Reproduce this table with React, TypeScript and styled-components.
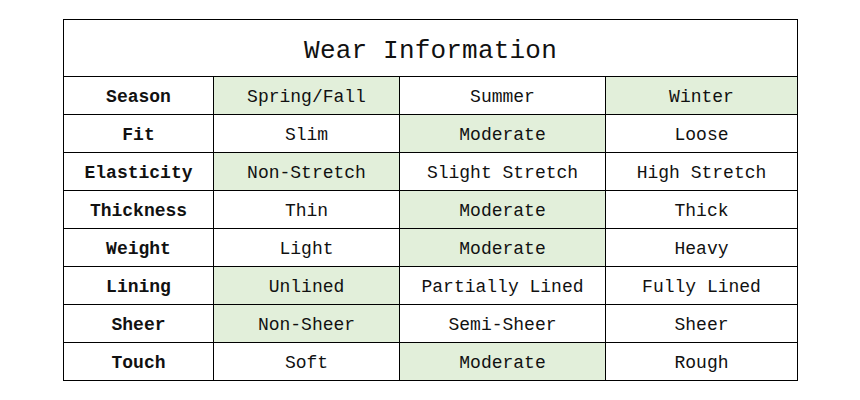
import React from 'react';
import styled, { createGlobalStyle } from 'styled-components';

const GlobalStyle = createGlobalStyle`
  body {
    margin: 0;
    background: #ffffff;
    font-family: "Liberation Mono", "DejaVu Sans Mono", monospace;
    color: #111111;
  }
`;

const Page = styled.div`
  padding: 19px 0 0 63px;
`;

const Table = styled.table`
  border-collapse: collapse;
  table-layout: fixed;
  width: 734px;
`;

const Col = styled.col<{ $w: number }>`
  width: ${(p) => p.$w}px;
`;

const TitleCell = styled.th`
  height: 51px;
  padding: 5px 0 0;
  border: 1px solid #000;
  font-size: 26px;
  font-weight: normal;
  text-align: center;
  letter-spacing: 0.2px;
`;

const LabelCell = styled.th`
  height: 34px;
  padding: 3px 0 0;
  border: 1px solid #000;
  font-size: 18px;
  font-weight: bold;
  text-align: center;
`;

const ValueCell = styled.td<{ $active?: boolean }>`
  height: 34px;
  padding: 3px 0 0;
  border: 1px solid #000;
  font-size: 18px;
  text-align: center;
  background: ${(p) => (p.$active ? '#e2efda' : '#ffffff')};
`;

const widths = [150, 186, 206, 192];

const rows = [
  { label: 'Season', values: ['Spring/Fall', 'Summer', 'Winter'], active: [0, 2] },
  { label: 'Fit', values: ['Slim', 'Moderate', 'Loose'], active: [1] },
  { label: 'Elasticity', values: ['Non-Stretch', 'Slight Stretch', 'High Stretch'], active: [0] },
  { label: 'Thickness', values: ['Thin', 'Moderate', 'Thick'], active: [1] },
  { label: 'Weight', values: ['Light', 'Moderate', 'Heavy'], active: [1] },
  { label: 'Lining', values: ['Unlined', 'Partially Lined', 'Fully Lined'], active: [0] },
  { label: 'Sheer', values: ['Non-Sheer', 'Semi-Sheer', 'Sheer'], active: [0] },
  { label: 'Touch', values: ['Soft', 'Moderate', 'Rough'], active: [1] },
];

const App = () => {
  return (
    <Page>
      <GlobalStyle />
      <Table>
        <colgroup>
          {widths.map((w, i) => (
            <Col key={i} $w={w} />
          ))}
        </colgroup>
        <thead>
          <tr>
            <TitleCell colSpan={4}>Wear Information</TitleCell>
          </tr>
        </thead>
        <tbody>
          {rows.map((row) => (
            <tr key={row.label}>
              <LabelCell>{row.label}</LabelCell>
              {row.values.map((v, i) => (
                <ValueCell key={v} $active={row.active.includes(i)}>
                  {v}
                </ValueCell>
              ))}
            </tr>
          ))}
        </tbody>
      </Table>
    </Page>
  );
};

export default App;
